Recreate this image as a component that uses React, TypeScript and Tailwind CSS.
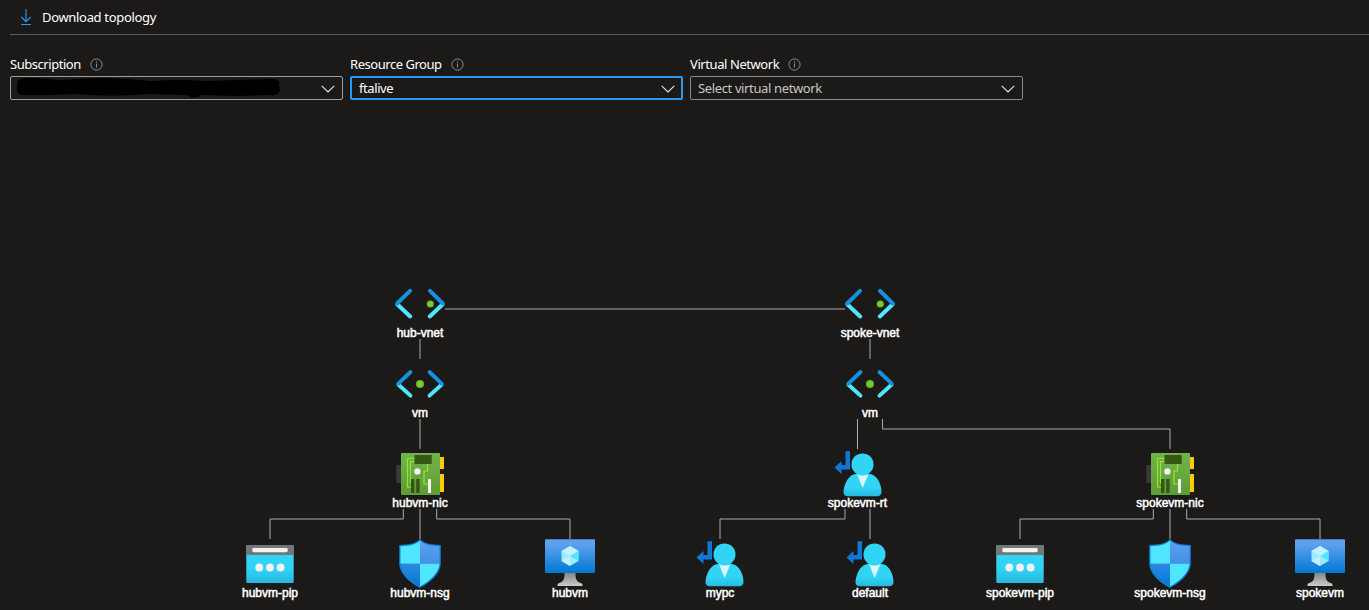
import React from "react";

type IconKind = "vnet" | "subnet" | "nic" | "pip" | "nsg" | "vm" | "route";

interface TopologyNode {
  id: string;
  label: string;
  kind: IconKind;
  x: number;
  y: number;
}

const nodes: TopologyNode[] = [
  { id: "hub", label: "hub-vnet", kind: "vnet", x: 420, y: 279 },
  { id: "spoke", label: "spoke-vnet", kind: "vnet", x: 870, y: 279 },
  { id: "hub-vm", label: "vm", kind: "subnet", x: 420, y: 359 },
  { id: "spoke-vm", label: "vm", kind: "subnet", x: 870, y: 359 },
  { id: "hub-nic", label: "hubvm-nic", kind: "nic", x: 420, y: 449 },
  { id: "spoke-rt", label: "spokevm-rt", kind: "route", x: 857.5, y: 449 },
  { id: "spoke-nic", label: "spokevm-nic", kind: "nic", x: 1170, y: 449 },
  { id: "hub-pip", label: "hubvm-pip", kind: "pip", x: 270, y: 539 },
  { id: "hub-nsg", label: "hubvm-nsg", kind: "nsg", x: 420, y: 539 },
  { id: "hubvm", label: "hubvm", kind: "vm", x: 570, y: 539 },
  { id: "mypc", label: "mypc", kind: "route", x: 720, y: 539 },
  { id: "default", label: "default", kind: "route", x: 870, y: 539 },
  { id: "spoke-pip", label: "spokevm-pip", kind: "pip", x: 1020, y: 539 },
  { id: "spoke-nsg", label: "spokevm-nsg", kind: "nsg", x: 1170, y: 539 },
  { id: "spokevm", label: "spokevm", kind: "vm", x: 1320, y: 539 },
];

const edges = [
  "M445 309H845",
  "M420 339V359",
  "M870 339V359",
  "M420 419V449",
  "M857.5 419V449",
  "M882.5 419V429H1170V449",
  "M403.3 509V519H270V539",
  "M420 509V539",
  "M436.7 509V519H570V539",
  "M845 509V519H720V539",
  "M870 509V539",
  "M1153.3 509V519H1020V539",
  "M1170 509V539",
  "M1186.7 509V519H1320V539",
];

function Gradients() {
  return (
    <defs>
      <linearGradient id="monitor" x1="0" y1="1" x2="0" y2="0">
        <stop offset="0" stopColor="#0078d4" />
        <stop offset="0.85" stopColor="#5ea0ef" />
      </linearGradient>
      <linearGradient id="stand" x1="0" y1="0" x2="0" y2="1">
        <stop offset="0" stopColor="#858585" />
        <stop offset="0.5" stopColor="#a8a8a8" />
        <stop offset="1" stopColor="#ccc" />
      </linearGradient>
      <linearGradient id="cyan" x1="0" y1="0" x2="0" y2="1">
        <stop offset="0.6" stopColor="#32d4f5" />
        <stop offset="1" stopColor="#27b9e0" />
      </linearGradient>
      <linearGradient id="board" x1="0" y1="0" x2="0" y2="1">
        <stop offset="0" stopColor="#70b44a" />
        <stop offset="1" stopColor="#5e9c35" />
      </linearGradient>
      <linearGradient id="quarterTop" x1="0" y1="0" x2="0" y2="1">
        <stop offset="0" stopColor="#5ea0ef" />
        <stop offset="1" stopColor="#4291e6" />
      </linearGradient>
      <linearGradient id="quarterBottom" x1="0" y1="0" x2="0" y2="1">
        <stop offset="0" stopColor="#3089e2" />
        <stop offset="1" stopColor="#0078d4" />
      </linearGradient>
      <radialGradient id="dot">
        <stop offset="0" stopColor="#86d633" />
        <stop offset="1" stopColor="#6cb32a" />
      </radialGradient>
    </defs>
  );
}

function VnetIcon() {
  return (
    <>
      <g fill="none" strokeWidth="4" strokeLinecap="round" strokeLinejoin="round">
        <path d="M2.500 25.500 15.200 37.500M47.500 25.500 34.800 37.500" stroke="#50e6ff" />
        <path d="M15 11.800 2.200 24.500M35 11.800 47.800 24.500" stroke="#1490df" />
      </g>
      <circle cx="35.300" cy="25" r="3.600" fill="url(#dot)" />
    </>
  );
}

function SubnetIcon() {
  return (
    <>
      <g fill="none" strokeWidth="3.900" strokeLinecap="round" strokeLinejoin="round">
        <path d="M3.500 25.800 15.500 36.600M46.500 25.800 34.500 36.600" stroke="#50e6ff" />
        <path d="M15.500 13 3.300 24.600M34.500 13 46.700 24.600" stroke="#1490df" />
      </g>
      <circle cx="25" cy="25" r="4" fill="url(#dot)" />
    </>
  );
}

function NicIcon() {
  return (
    <>
      <rect x="1.3" y="16" width="7" height="18" rx="1" fill="#3b3a3a" />
      <path d="M44 8h5v12h-5zM44 25h5v18h-5z" fill="#ffca00" />
      <rect x="6" y="4" width="39" height="42" rx="1" fill="url(#board)" />
      <path
        d="M20 9.500h-7.500v28.500h4M20 12.500h-4.500v21.500h2M32.500 15v7h-3.500v13h4"
        fill="none"
        stroke="#9be528"
        strokeWidth="1.200"
      />
      <path d="M19.500 6h17.200v9H19.500z" fill="#365615" />
      <path d="M16 30h3.400v14H16zM21.200 30h3.400v14h-3.400z" fill="#365615" />
      <path d="M33 30h3v14h-3z" fill="#f2f2f2" />
      <circle cx="22.400" cy="22.400" r="3.200" fill="#f2f2f2" />
    </>
  );
}

function PublicIpIcon() {
  return (
    <>
      <rect x="1.3" y="6" width="47.4" height="38" rx="1" fill="url(#cyan)" />
      <path d="M1.3 16V7q0-1 1-1h45.4q1 0 1 1v9z" fill="#767676" />
      <rect x="7.3" y="9" width="35.4" height="4.2" rx="1.4" fill="#f2f2f2" />
      <g fill="#f2f2f2">
        <circle cx="14.3" cy="28.5" r="3.9" />
        <circle cx="25" cy="28.5" r="3.9" />
        <circle cx="35.6" cy="28.5" r="3.9" />
      </g>
    </>
  );
}

function SecurityGroupIcon() {
  return (
    <>
      <path d="M25 0c4.500 5 11.500 5.600 20.800 6v18c0 11.500-12.500 20.500-20.800 25C16.700 44.500 4.200 35.500 4.200 24V6C13.500 5.600 20.500 5 25 0z" fill="#1080dc" />
      <path d="M25 1.600v23.200H5.500V7.200C14 6.900 20.500 6.300 25 1.600z" fill="#50e6ff" />
      <path d="M25 1.600v23.200h19.500V7.200C36 6.900 29.500 6.300 25 1.600z" fill="url(#quarterTop)" />
      <path d="M25 24.800v22.800C16.500 42.800 6.200 34.500 5.500 24.800z" fill="url(#quarterBottom)" />
      <path d="M25 24.800v22.800c8.500-4.800 18.800-13.100 19.500-22.800z" fill="#50e6ff" />
    </>
  );
}

function MachineIcon() {
  return (
    <>
      <path d="M19.500 34h11c0 6 .7 8.500 5.500 10.100q1.700.5 1.700 2.900H12.300q0-2.400 1.700-2.900C18.800 42.500 19.500 40 19.500 34z" fill="url(#stand)" />
      <rect x="0" y="0.300" width="50" height="33.700" rx="1" fill="url(#monitor)" />
      <path d="M25 7 33.500 12v9.900L25 27l-8.500-5.100V12z" fill="#9cebff" />
      <path d="M25 7 33.500 12 25 17l-8.500-5z" fill="#c3f1ff" />
      <path d="M16.500 21.900 25 17v10z" fill="#c3f1ff" />
      <path d="M33.500 12 25 17 33.500 21.900z" fill="#50e6ff" />
    </>
  );
}

function RouteIcon() {
  return (
    <>
      <path d="M12.500 2.300H17v18.200H8.500v4.400L1.500 18.500 8.500 12v4h4z" fill="#0f78d4" />
      <path d="M24.300 24.700h11c8 0 13.200 9.500 13.200 18.300 0 2.700-1.600 4.200-4 4.200H14.500c-2.500 0-4.200-1.500-4-4.200.6-8.800 5.500-18.300 13.800-18.300z" fill="url(#cyan)" />
      <path d="M24 24.900q5.500 2.500 11.500 0L29.600 39z" fill="#d8f7ff" />
      <circle cx="29.500" cy="15.400" r="11" fill="#32d4f5" />
    </>
  );
}

const icons: Record<IconKind, () => React.JSX.Element> = {
  vnet: VnetIcon,
  subnet: SubnetIcon,
  nic: NicIcon,
  pip: PublicIpIcon,
  nsg: SecurityGroupIcon,
  vm: MachineIcon,
  route: RouteIcon,
};

function InfoIcon() {
  return (
    <svg className="mt-px" width="13" height="13" viewBox="0 0 13 13" fill="none" stroke="#8f8d8b">
      <circle cx="6.500" cy="6.500" r="5.600" />
      <path d="M6.500 5.500v4M6.500 3.300v1.200" />
    </svg>
  );
}

interface FieldProps {
  label: string;
  labelClass: string;
  boxClass: string;
  children: React.ReactNode;
}

function Field({ label, labelClass, boxClass, children }: FieldProps) {
  return (
    <div className="w-[333px]">
      <div className="flex h-[18px] items-center gap-[9px]">
        <span className={labelClass}>{label}</span>
        <InfoIcon />
      </div>
      <button
        className={`mt-[3px] flex h-6 w-full items-center justify-between rounded-[2px] text-left ${boxClass}`}
      >
        {children}
        <svg className="mt-px" width="14" height="8" viewBox="0 0 14 8" fill="none" stroke="#e6e6e6" strokeWidth="1.100">
          <path d="M.7.800 7 7 13.300.800" />
        </svg>
      </button>
    </div>
  );
}

export default function App() {
  return (
    <main className="flex h-[610px] w-[1369px] flex-col overflow-hidden bg-[#1b1a19] font-['Noto_Sans','Open_Sans',sans-serif] text-[13px] leading-[18px] text-white">
      <header className="ml-[10px] flex h-[35px] shrink-0 items-center gap-[10px] border-b border-[#605e5c] pl-[10px]">
        <svg width="12" height="17" viewBox="0 0 12 17" fill="none" stroke="#2899f5" strokeWidth="1.100">
          <path d="M6 0v12.500M1.300 8 6 12.700 10.700 8M1 15.500h10" />
        </svg>
        <span className="whitespace-nowrap tracking-[-0.32px]">Download topology</span>
      </header>

      <section className="ml-[10px] mt-5 flex shrink-0 gap-[7px]">
        <Field label="Subscription" labelClass="tracking-[-0.46px]" boxClass="border border-[#a19f9d] pl-[5px] pr-[7px]">
          <svg width="266" height="22" viewBox="0 0 266 22">
            <path
              d="M3 3Q8 0 18 1L45 3Q80 0 110 2L135 4Q165 2 190 4L220 3 258 2Q265 3 263 8L264 13Q263 19 255 18L220 19 185 18Q183 21 175 20L170 18 130 17Q95 20 60 17L35 18Q15 18 5 18 0 16 1 10 1 5 3 3z"
              fill="#000"
            />
          </svg>
        </Field>
        <Field label="Resource Group" labelClass="tracking-[-0.46px]" boxClass="border-2 border-[#2899f5] pl-[7px] pr-[6px]">
          <span className="tracking-[-0.42px]">ftalive</span>
        </Field>
        <Field label="Virtual Network" labelClass="tracking-[-0.42px]" boxClass="border border-[#8a8886] pl-[7px] pr-[7px]">
          <span className="tracking-[-0.37px] text-[#c8c6c4]">Select virtual network</span>
        </Field>
      </section>

      <section className="relative -mt-[100px] h-[610px] shrink-0">
        <svg className="absolute inset-0" width="1369" height="610" viewBox="0 0 1369 610">
          <Gradients />
          <g fill="none" stroke="#ababab">
            {edges.map((d) => (
              <path key={d} d={d} />
            ))}
          </g>
        </svg>
        {nodes.map((node) => {
          const Icon = icons[node.kind];
          return (
            <div
              key={node.id}
              className="absolute flex w-[100px] -translate-x-1/2 flex-col items-center"
              style={{ left: node.x, top: node.y }}
            >
              <svg width="50" height="50" viewBox="0 0 50 50">
                <Icon />
              </svg>
              <span className="-mt-[3px] whitespace-nowrap font-['Liberation_Sans',Arial,sans-serif] text-[12px] leading-[14px] [-webkit-text-stroke:0.5px_#fff]">
                {node.label}
              </span>
            </div>
          );
        })}
      </section>
    </main>
  );
}
